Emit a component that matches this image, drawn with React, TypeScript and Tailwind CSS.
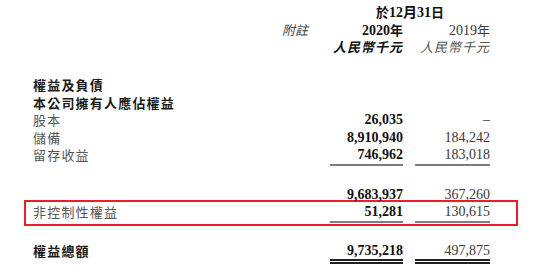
const cjk = "font-['Noto_Sans_CJK_TC',sans-serif]"
const num = "font-['Liberation_Serif','Noto_Sans_CJK_TC',serif]"

type Row = {
  label: string
  bold?: boolean
  a?: string
  b?: string
  line?: 'single' | 'double'
}

function Cells({ a, b, line }: { a?: string; b?: string; line?: Row['line'] }) {
  const border =
    line === 'single'
      ? 'border-b-2 border-[#7d7d7d]'
      : line === 'double'
        ? 'border-b-[5px] border-double border-[#222]'
        : ''
  return (
    <>
      <div className={`w-[73px] text-right font-bold text-[#111] ${num} ${border}`}>{a}</div>
      <div className={`ml-[12px] w-[75px] text-right text-[#3a3a3a] ${num} ${border}`}>{b}</div>
    </>
  )
}

function Line({ label, bold, a, b, line }: Row) {
  return (
    <div className="flex h-[17.5px] items-start leading-[17.5px]">
      <div
        className={`flex-1 text-[13px] leading-[17.5px] tracking-[1.2px] ${cjk} ${bold ? 'font-bold text-[#1a1a1a]' : 'text-[#555]'}`}
      >
        {label}
      </div>
      <Cells a={a} b={b} line={line} />
    </div>
  )
}

export default function App() {
  return (
    <div className="h-[278px] w-[550px] overflow-hidden bg-white pl-[33px] pr-[60px] pt-[3px] text-[14px]">
      {/* header */}
      <div className="flex h-[17.5px] leading-[17.5px]">
        <div className="flex-1" />
        <div className={`w-[160px] text-center font-bold text-[#111] ${num}`}>
          <span className={`${cjk} text-[13px]`}>於</span>12月31<span className={`${cjk} text-[13px]`}>日</span>
        </div>
      </div>
      <div className="flex h-[17.5px] leading-[17.5px]">
        <div className="flex-1" />
        <div className={`w-[48px] text-[13px] italic text-[#444] ${cjk}`}>附註</div>
        <div className={`w-[73px] text-right font-bold text-[#111] ${num}`}>
          2020<span className={`${cjk} text-[13px]`}>年</span>
        </div>
        <div className={`ml-[12px] w-[75px] text-right text-[#3a3a3a] ${num}`}>
          2019<span className={`${cjk} text-[13px]`}>年</span>
        </div>
      </div>
      <div className="flex h-[17.5px] leading-[17.5px]">
        <div className="flex-1" />
        <div className={`w-[73px] text-right text-[13px] font-bold italic tracking-[1px] text-[#111] ${cjk}`}>人民幣千元</div>
        <div className={`ml-[12px] w-[75px] text-right text-[13px] italic tracking-[1px] text-[#555] ${cjk}`}>人民幣千元</div>
      </div>

      {/* body */}
      <div className="mt-[20.75px]">
        <Line label="權益及負債" bold />
        <Line label="本公司擁有人應佔權益" bold />
        <Line label="股本" a="26,035" b="–" />
        <Line label="儲備" a="8,910,940" b="184,242" />
        <Line label="留存收益" a="746,962" b="183,018" line="single" />
      </div>

      <div className="mt-[22px]">
        <Line label="" a="9,683,937" b="367,260" />
      </div>

      <div className="-ml-[9px] -mr-[28px] mt-[-3px] border-2 border-[#ee1c25] pb-[3px] pl-[7px] pr-[26px] pt-[1px]">
        <Line label="非控制性權益" a="51,281" b="130,615" line="single" />
      </div>

      <div className="mt-[15.75px]">
        <Line label="權益總額" bold a="9,735,218" b="497,875" line="double" />
      </div>
    </div>
  )
}
